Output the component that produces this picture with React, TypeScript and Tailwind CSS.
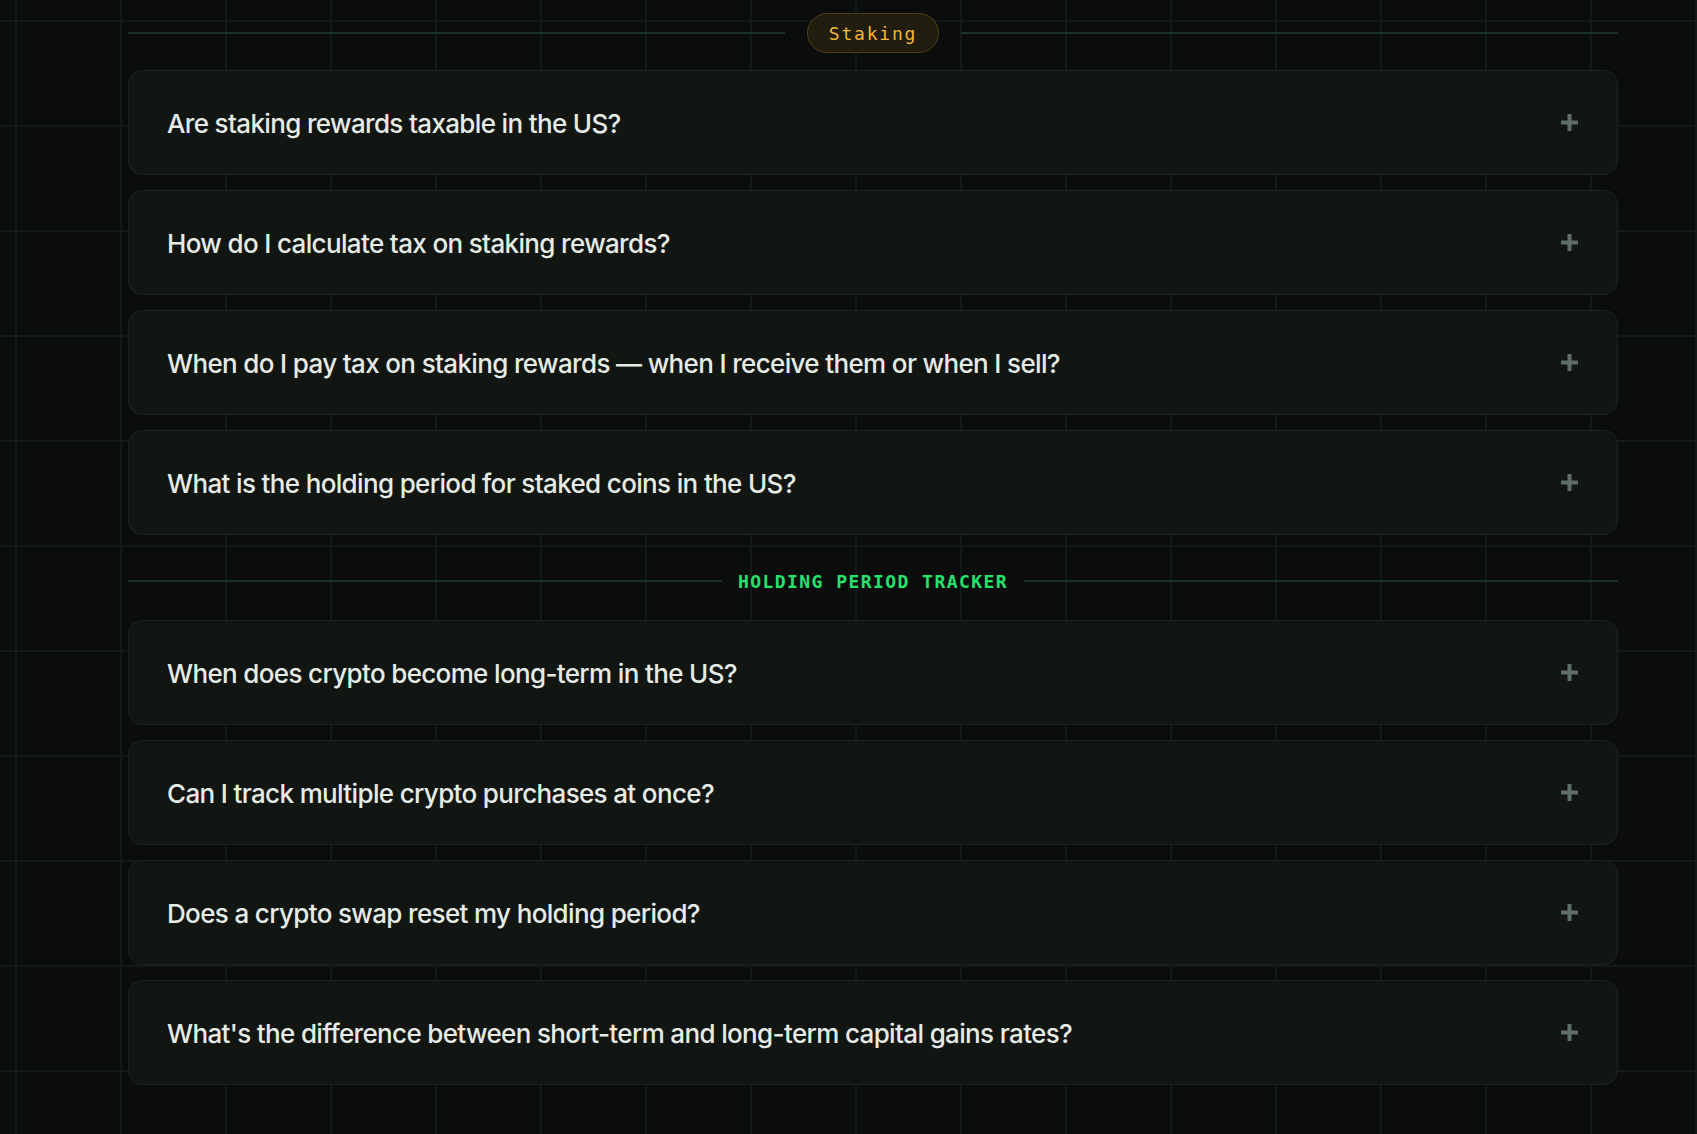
import React from 'react'

const staking = [
  'Are staking rewards taxable in the US?',
  'How do I calculate tax on staking rewards?',
  'When do I pay tax on staking rewards — when I receive them or when I sell?',
  'What is the holding period for staked coins in the US?',
]

const holding = [
  'When does crypto become long-term in the US?',
  'Can I track multiple crypto purchases at once?',
  'Does a crypto swap reset my holding period?',
  "What's the difference between short-term and long-term capital gains rates?",
]

function PlusIcon() {
  return (
    <svg width="17" height="17" viewBox="0 0 17 17" className="shrink-0">
      <rect x="6.5" y="0" width="4" height="17" rx="0.5" fill="#5e6e66" />
      <rect x="0" y="6.5" width="17" height="4" rx="0.5" fill="#5e6e66" />
    </svg>
  )
}

function FaqItem({ question }: { question: string }) {
  return (
    <button
      type="button"
      className="flex h-[105px] w-full items-center justify-between rounded-[14px] border border-[#1d241f] bg-[#111612] pl-[38px] pr-[39px] text-left"
    >
      <span className="pt-[2px] font-['Inter',sans-serif] text-[26px] font-medium tracking-[-0.025em] text-[#e6ebe6]">
        {question}
      </span>
      <PlusIcon />
    </button>
  )
}

export default function App() {
  return (
    <div className="min-h-screen w-full bg-[#0a0d0c] bg-[linear-gradient(to_right,#141a17_2px,transparent_2px),linear-gradient(to_bottom,#141a17_2px,transparent_2px)] bg-[size:105px_105px] bg-[position:15px_20px]">
      <div className="ml-[128px] w-[1490px] pt-[13px] pb-[49px]">
        {/* Staking header */}
        <div className="flex h-[40px] items-center">
          <div className="h-[2px] flex-1 bg-[#1b322c]" />
          <span className="mx-[22px] inline-flex h-[40px] items-center rounded-full border border-[#4d3f17] bg-[#211d0e] px-[21px] font-['DejaVu_Sans_Mono',monospace] text-[18px] tracking-[0.1em] text-[#f2b533]">
            Staking
          </span>
          <div className="h-[2px] flex-1 bg-[#1b322c]" />
        </div>

        <div className="mt-[17px] flex flex-col gap-[15px]">
          {staking.map(q => (
            <FaqItem key={q} question={q} />
          ))}
        </div>

        {/* Holding period header */}
        <div className="mt-[34px] mb-[27px] flex h-[24px] items-center">
          <div className="h-[2px] flex-1 bg-[#1b322c]" />
          <span className="mx-4 font-['DejaVu_Sans_Mono',monospace] text-[18px] font-bold tracking-[0.08em] text-[#27e36c]">
            HOLDING PERIOD TRACKER
          </span>
          <div className="h-[2px] flex-1 bg-[#1b322c]" />
        </div>

        <div className="flex flex-col gap-[15px]">
          {holding.map(q => (
            <FaqItem key={q} question={q} />
          ))}
        </div>
      </div>
    </div>
  )
}
